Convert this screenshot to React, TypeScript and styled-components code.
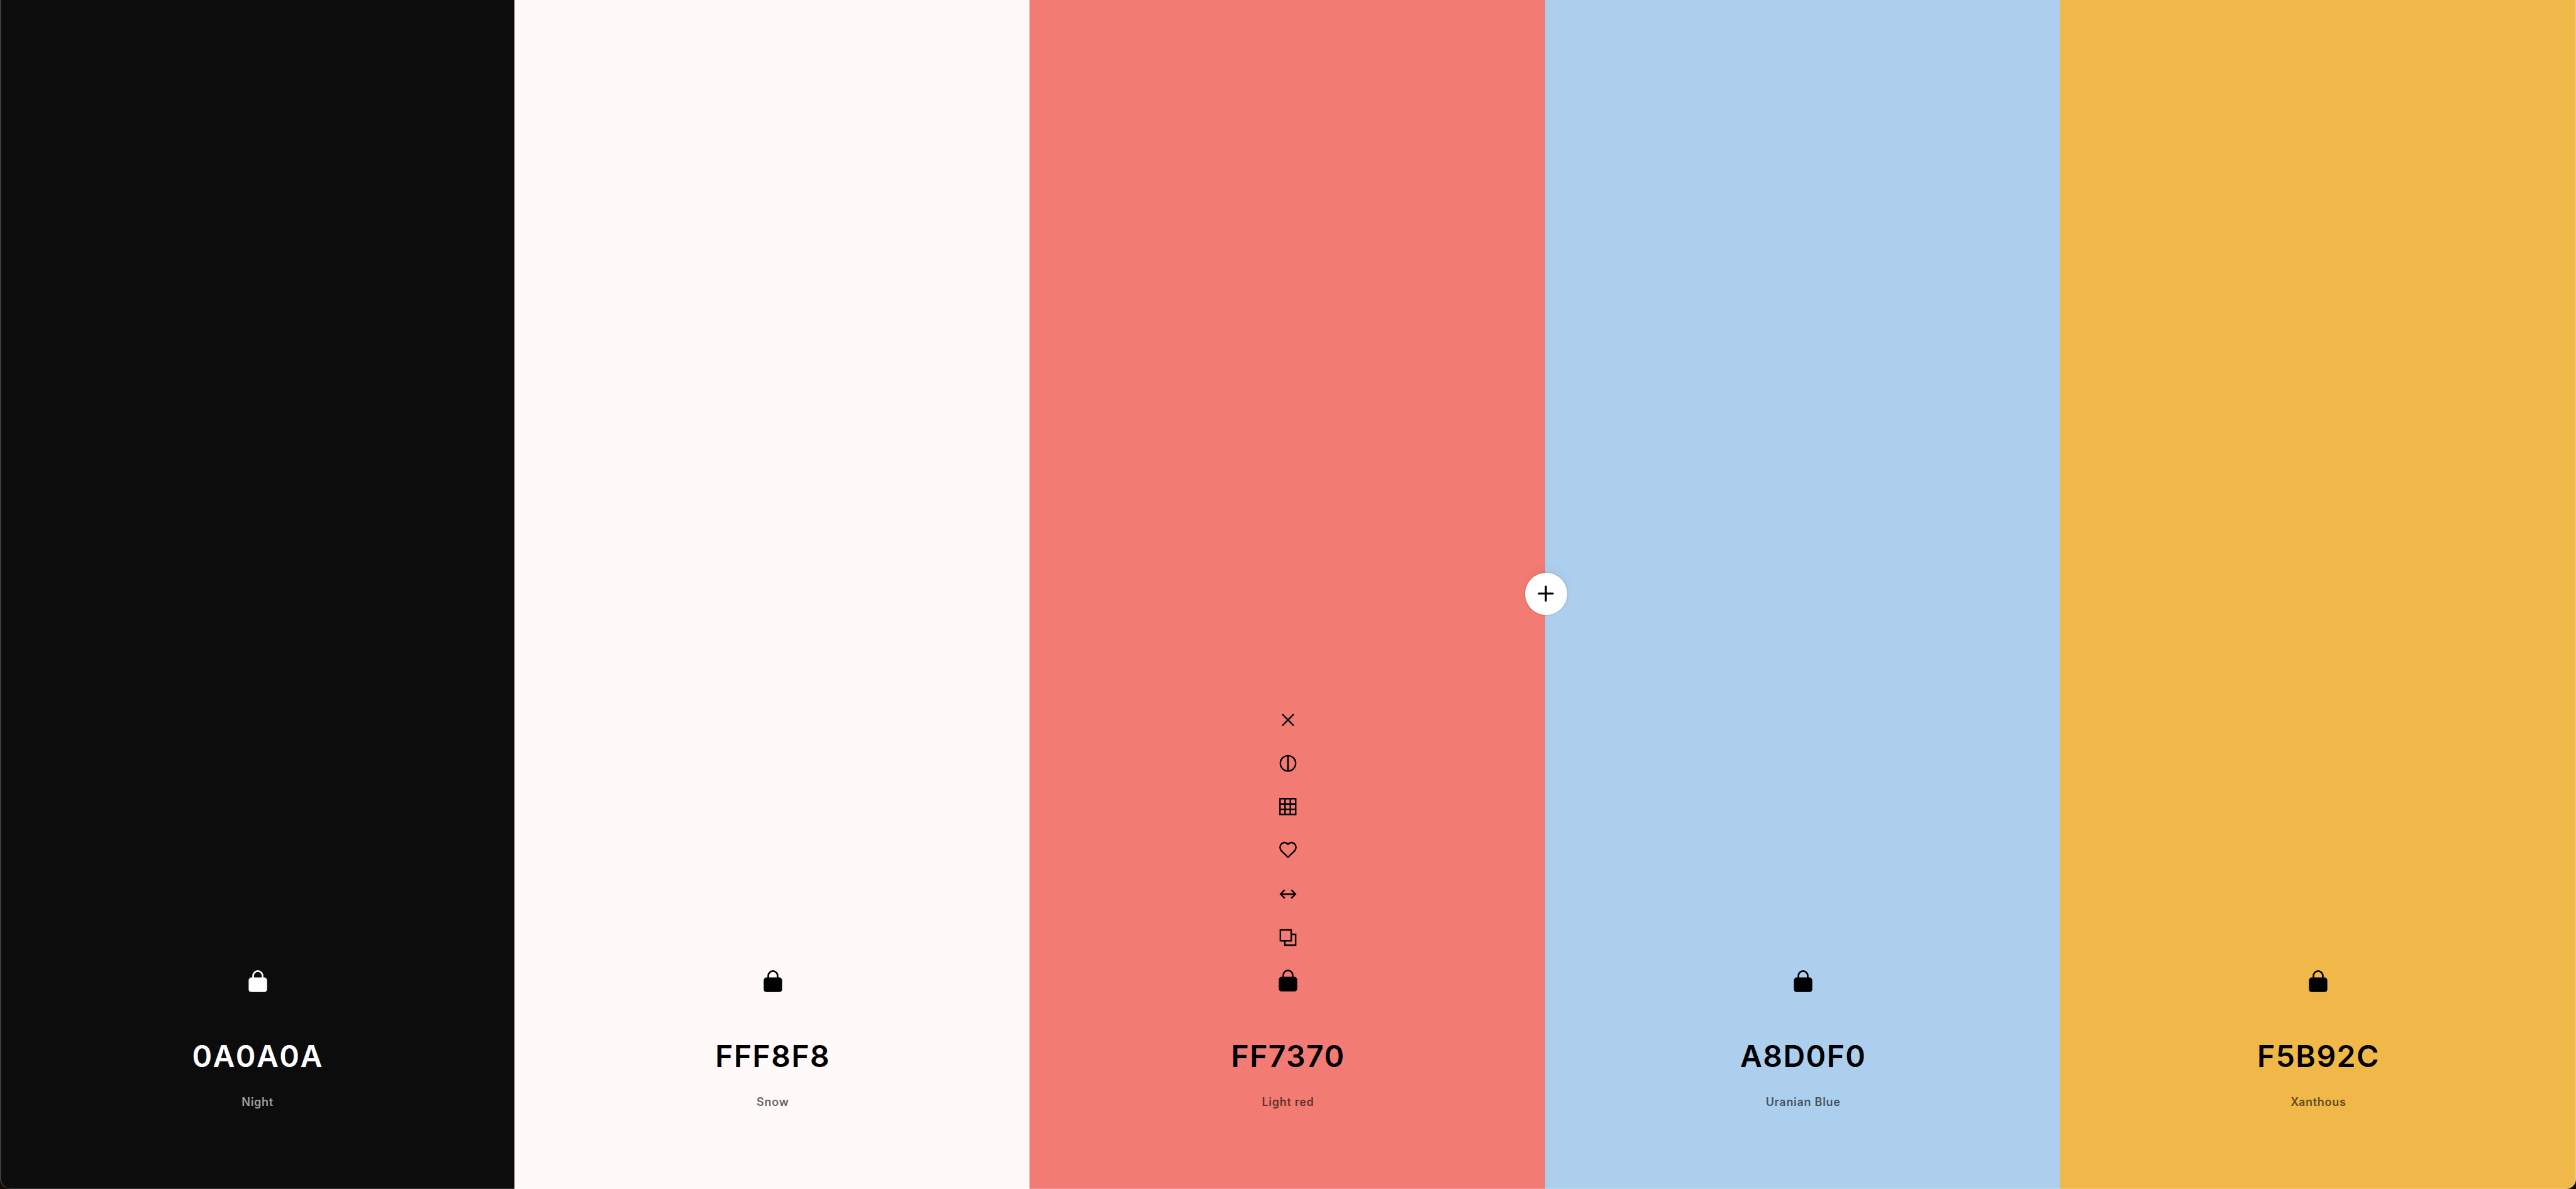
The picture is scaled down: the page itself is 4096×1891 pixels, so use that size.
import React from "react";
import styled, { createGlobalStyle } from "styled-components";

const GlobalStyle = createGlobalStyle`
  *, *::before, *::after { box-sizing: border-box; }
  html, body { margin: 0; padding: 0; background: #120d0a; }
`;

const Palette = styled.main`
  position: relative;
  display: grid;
  grid-template-columns: repeat(5, minmax(0, 1fr));
  height: 100vh;
  overflow: hidden;
  border-radius: 0 0 16px 16px;
  font-family: Inter, "Liberation Sans", sans-serif;

  &::after {
    content: "";
    position: absolute;
    inset: 0;
    border: 2px solid rgba(255, 255, 255, 0.2);
    border-top: 0;
    border-bottom-width: 1px;
    border-radius: inherit;
    pointer-events: none;
  }
`;

const Column = styled.section<{ $color: string; $light?: boolean }>`
  position: relative;
  display: flex;
  flex-direction: column;
  align-items: center;
  justify-content: flex-end;
  padding: 0 0 126px 1px;
  margin-left: -1px;
  background: ${(p) => p.$color};
  color: ${(p) => (p.$light ? "#fff" : "#000")};

  &:first-child {
    margin-left: 0;
    padding-left: 0;
  }
`;

const Tools = styled.div<{ $count: number }>`
  display: grid;
  grid-auto-rows: 1fr;
  height: ${(p) => (p.$count > 1 ? 485 : 69)}px;
  margin-bottom: 48px;
`;

const PlainButton = styled.button`
  padding: 0;
  border: 0;
  background: none;
  color: inherit;
  font-family: inherit;
  cursor: pointer;
`;

const ToolButton = styled(PlainButton)`
  display: flex;
  align-items: center;
  justify-content: center;
  width: 69px;
`;

const Glyph = styled.svg`
  display: block;
  width: 40px;
  height: 40px;
  overflow: visible;
`;

const Code = styled(PlainButton)`
  font-size: 48px;
  font-weight: 600;
  line-height: 74px;
  letter-spacing: 0.03em;
`;

const Name = styled(PlainButton)`
  margin-top: 24px;
  font-size: 18px;
  font-weight: 600;
  line-height: 24px;
  letter-spacing: 0.04em;
  opacity: 0.6;
`;

const AddButton = styled(PlainButton)`
  position: absolute;
  top: 50%;
  right: 0;
  z-index: 1;
  display: flex;
  align-items: center;
  justify-content: center;
  width: 67px;
  height: 67px;
  margin-top: -35px;
  margin-right: -34px;
  border-radius: 50%;
  background: #fff;
  color: #000;
  box-shadow: 0 0 0 2px rgba(0, 0, 0, 0.06), 0 -8px 16px rgba(0, 0, 0, 0.03);
`;

const stroke = { fill: "none", stroke: "currentColor", strokeWidth: 3 };

const glyphs: Record<string, React.ReactNode> = {
  remove: <path d="M13.7 13.7 36.3 36.3M36.3 13.7 13.7 36.3" {...stroke} />,
  shades: (
    <g {...stroke}>
      <circle cx="25" cy="25" r="15.2" />
      <path d="M25 10V40" strokeWidth="3.3" />
    </g>
  ),
  grid: (
    <path
      d="M9.1 9.1H40.3V40.3H9.1ZM19.1 9V40M29.6 9V40M9 19.7H40M9 30.2H40"
      {...stroke}
    />
  ),
  save: (
    <path
      d="M25 39.2 11.8 26.3C8.2 22.7 8.4 16.2 11.6 12.9C15.2 9.1 21 9 24.2 12.6L25 13.5L25.8 12.6C29 9 34.8 9.1 38.4 12.9C41.6 16.2 41.8 22.7 38.2 26.3Z"
      {...stroke}
    />
  ),
  drag: (
    <path
      d="M10.4 25H39.6M18.4 16.8 10.2 25 18.4 33.2M31.6 16.8 39.8 25 31.6 33.2"
      {...stroke}
    />
  ),
  copy: <path d="M9.8 10H31.4V31.6H9.8ZM31.4 18.8H40.2V40.4H18.8V31.6" {...stroke} />,
  lock: (
    <g>
      <rect x="6.7" y="17" width="36.6" height="29" rx="5.5" fill="currentColor" />
      <path d="M15.7 18V13.6A9.3 9.3 0 0 1 34.3 13.6V18" {...stroke} strokeWidth="3.4" />
    </g>
  ),
  add: (
    <path
      d="M25 11V39M11 25H39"
      fill="none"
      stroke="currentColor"
      strokeWidth="4"
      strokeLinecap="round"
    />
  ),
};

const Icon = ({ name }: { name: string }) => (
  <Glyph viewBox="0 0 50 50" aria-hidden="true">
    {glyphs[name]}
  </Glyph>
);

type Swatch = {
  code: string;
  name: string;
  color: string;
  light?: boolean;
  active?: boolean;
};

const swatches: Swatch[] = [
  { code: "0A0A0A", name: "Night", color: "#0c0c0c", light: true },
  { code: "FFF8F8", name: "Snow", color: "#fff9f9" },
  { code: "FF7370", name: "Light red", color: "#f27b73", active: true },
  { code: "A8D0F0", name: "Uranian Blue", color: "#accfed" },
  { code: "F5B92C", name: "Xanthous", color: "#f0b849" },
];

const activeTools = ["remove", "shades", "grid", "save", "drag", "copy", "lock"];

export default function App() {
  return (
    <>
      <GlobalStyle />
      <Palette>
        {swatches.map((s) => {
          const tools = s.active ? activeTools : ["lock"];
          return (
            <Column key={s.code} $color={s.color} $light={s.light}>
              <Tools $count={tools.length}>
                {tools.map((t) => (
                  <ToolButton key={t} type="button" aria-label={t}>
                    <Icon name={t} />
                  </ToolButton>
                ))}
              </Tools>
              <Code type="button">{s.code}</Code>
              <Name type="button">{s.name}</Name>
              {s.active && (
                <AddButton type="button" aria-label="add">
                  <Icon name="add" />
                </AddButton>
              )}
            </Column>
          );
        })}
      </Palette>
    </>
  );
}
